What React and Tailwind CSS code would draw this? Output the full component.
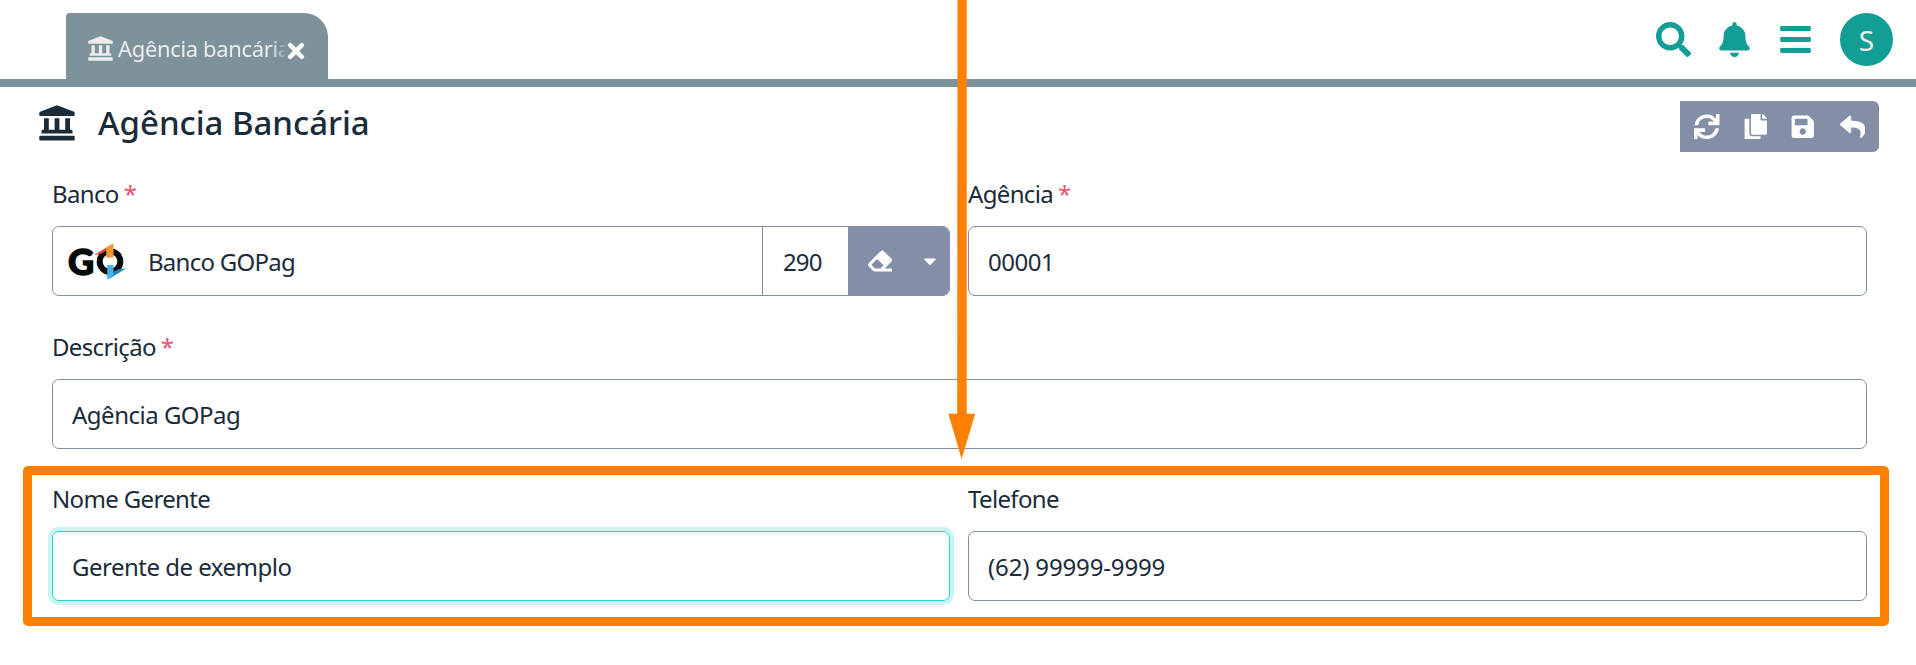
import { FaSearch, FaBell, FaBars, FaSync, FaCopy, FaSave, FaReply, FaEraser, FaTimes, FaCaretDown } from "react-icons/fa";

function BankIcon({ className }) {
  return (
    <svg viewBox="0 0 36 36" fill="currentColor" className={className}>
      <path d="M18 0.200 L35 6.800 Q35.700 7.100 35.700 8 V10 Q35.700 11 34.700 11 H1.300 Q0.300 11 0.300 10 V8 Q0.300 7.100 1 6.800 Z" />
      <path d="M5 13.300 H9.800 V24.700 H15.600 V13.300 H20.400 V24.700 H26.200 V13.300 H31 V24.700 H32 Q33.500 24.700 33.500 26 V28.400 H2.500 V26 Q2.500 24.700 4 24.700 H5 Z" />
      <rect x="0.300" y="30.700" width="35.400" height="4.800" rx="1" />
    </svg>
  );
}

function Label({ children, required }) {
  return (
    <div className="h-[50px] whitespace-nowrap pt-[2px] text-2xl leading-8 tracking-[-0.650px]">
      {children}
      {required && <span className="ml-[5px] text-[#e4566e]">*</span>}
    </div>
  );
}

function Field({ label, required, value, focused, className = "min-w-0 flex-1" }) {
  return (
    <div className={className}>
      <Label required={required}>{label}</Label>
      <div
        className={
          focused
            ? "flex h-[70px] items-center rounded-[7px] border border-[#20d5cb] pl-[19px] pt-[1px] text-2xl tracking-[-0.5px] shadow-[0_0_0_4px_#c7f5f1]"
            : "flex h-[70px] items-center rounded-[7px] border border-[#838fa6] pl-[19px] pt-[1px] text-2xl tracking-[-0.5px]"
        }
      >
        {value}
      </div>
    </div>
  );
}

function GoLogo() {
  return (
    <svg width="60" height="38" viewBox="0 0 60 38" className="shrink-0">
      <text x="0" y="31.500" fontFamily="Lato" fontWeight="900" fontSize="36" fill="#060909" stroke="#060909" strokeWidth="1.400">G</text>
      <ellipse cx="42" cy="18.500" rx="10.300" ry="10.300" fill="none" stroke="#060909" strokeWidth="6" />
      <path d="M39 12.500 H46 V24 H39 Z" fill="#ffffff" />
      <path d="M26 12 L44 1.200 L39 7 L33 11 Z" fill="#e2452c" />
      <path d="M38.200 4.500 L44.500 1 H45.500 V14.500 H38.200 Z" fill="#f6962a" />
      <path d="M58 25.500 L41 36 L46 28.500 L51 26 Z" fill="#2384b8" />
      <path d="M39.200 22 H45.500 V32.500 L40 36 H39.200 Z" fill="#41b1e6" />
    </svg>
  );
}

export default function App() {
  return (
    <div className="relative h-[665px] w-[1916px] overflow-hidden bg-white font-['Noto_Sans','Open_Sans',sans-serif] text-[#1a2b3a]">
      <header className="flex h-[87px] justify-between border-b-8 border-[#7e929c] pl-[66px] pr-[23px] pt-[13px]">
        <div className="flex h-[66px] w-[262px] items-center rounded-tl-[4px] rounded-tr-[24px] bg-[#7e929c] pl-[22px] pt-[5px] text-[#ececec]">
          <BankIcon className="mb-px size-[25px] shrink-0" />
          <span className="ml-[5px] w-[171px] overflow-hidden whitespace-nowrap text-[22px] tracking-[-0.350px] [mask-image:linear-gradient(to_right,black_90%,transparent_99%)]">
            Agência bancária
          </span>
          <FaTimes className="-ml-[5px] mt-[5px] shrink-0 text-[24px] text-white" />
        </div>
        <div className="flex h-[53px] items-center text-[35px] text-[#129e94]">
          <FaSearch />
          <FaBell className="ml-[26px]" />
          <FaBars className="ml-[26px]" />
          <div className="ml-[27px] flex size-[53px] items-center justify-center rounded-full bg-[#129e94] pt-[1px] text-[28px] text-[#ececec]">
            S
          </div>
        </div>
      </header>

      <div className="flex h-[83px] items-start justify-between pl-[39px] pr-[37px] pt-[14px]">
        <div className="flex items-start">
          <BankIcon className="mt-[4px] size-9" />
          <h1 className="ml-[23px] whitespace-nowrap text-[33px] font-medium leading-[44px] tracking-[-0.040px]">Agência Bancária</h1>
        </div>
        <div className="flex h-[51px] w-[199px] items-center rounded-r-[6px] bg-[#838fa6] pl-[14px] text-[25.500px] text-white">
          <FaSync />
          <FaCopy className="ml-[23px]" />
          <FaSave className="ml-[22px]" />
          <FaReply className="ml-[24px]" />
        </div>
      </div>

      <main className="flex flex-col gap-[33px] pl-[52px] pr-[49px]">
        <div className="flex gap-[18px] pt-[6px]">
          <div className="w-[898px]">
            <Label required>Banco</Label>
            <div className="flex h-[70px] overflow-hidden rounded-[7px] border border-[#838fa6] text-2xl tracking-[-0.5px]">
              <div className="flex w-[710px] items-center border-r border-[#838fa6] pl-[15px] pt-[1px]">
                <GoLogo />
                <span className="ml-[20px] tracking-[-0.750px]">Banco GOPag</span>
              </div>
              <div className="flex w-[85px] items-center pl-[20px] pt-[1px] tracking-[-0.900px]">290</div>
              <div className="flex flex-1 items-center bg-[#838fa6] pl-[20px] text-white">
                <FaEraser className="text-[24px]" />
                <FaCaretDown className="ml-[28px] text-[20px]" />
              </div>
            </div>
          </div>
          <Field label="Agência" required value="00001" />
        </div>
        <Field label="Descrição" required value="Agência GOPag" />
        <div className="-mt-[1px] flex gap-[18px]">
          <Field label="Nome Gerente" value="Gerente de exemplo" focused className="w-[898px]" />
          <Field label="Telefone" value={<span className="tracking-[-0.150px]">(62) 99999-9999</span>} />
        </div>
      </main>

      <div className="absolute left-[23px] top-[466px] h-[160px] w-[1866px] rounded-[5px] border-[9px] border-[#ff8000]" />
      <svg width="28" height="460" viewBox="0 0 28 460" className="absolute left-[948px] top-0">
        <path d="M9.500 0 H18.700 V413.700 H27.200 L13.600 459 L0.400 413.700 H9.200 Z" fill="#ff8000" />
      </svg>
    </div>
  );
}
